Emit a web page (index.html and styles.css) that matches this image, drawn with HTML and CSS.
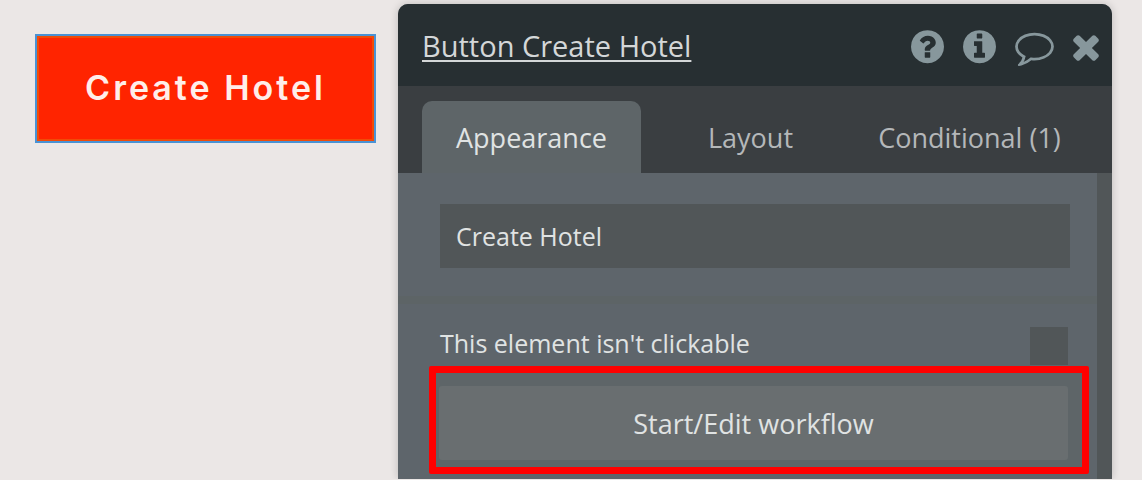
FILE: index.html
```html
<!DOCTYPE html>
<html lang="en">
<head>
    <meta charset="UTF-8">
    <meta name="viewport" content="width=device-width, initial-scale=1.0">
    <title>Button Create Hotel</title>
    <link rel="stylesheet" href="styles.css">
</head>
<body>
    <main class="editor">
        <button type="button" class="canvas-button">Create Hotel</button>

        <section class="panel">
            <header class="panel-header">
                <a href="#" class="panel-title">Button Create Hotel</a>
                <div class="panel-actions">
                    <button type="button" aria-label="Help">
                        <svg width="33" height="36" viewBox="128 128 1536 1664"><path d="M1024 1376v-192q0-14-9-23t-23-9h-192q-14 0-23 9t-9 23v192q0 14 9 23t23 9h192q14 0 23-9t9-23zm256-672q0-88-55.5-163t-138.5-116-170-41q-243 0-371 213-15 24 8 42l132 100q7 6 19 6 16 0 25-12 53-68 86-92 34-24 86-24 48 0 85.5 26t37.5 59q0 38-20 61t-68 45q-63 28-115.5 86.5t-52.5 125.5v36q0 14 9 23t23 9h192q14 0 23-9t9-23q0-19 21.5-49.5t54.5-49.5q32-18 49-28.5t46-35 44.5-48 28-60.5 12.5-81zm384 192q0 209-103 385.5t-279.5 279.5-385.5 103-385.5-103-279.5-279.5-103-385.5 103-385.5 279.5-279.5 385.5-103 385.5 103 279.5 279.5 103 385.5z"/></svg>
                    </button>
                    <button type="button" aria-label="Info">
                        <svg width="33" height="36" viewBox="128 128 1536 1664"><path d="M1152 1376v-160q0-14-9-23t-23-9h-96v-512q0-14-9-23t-23-9h-320q-14 0-23 9t-9 23v160q0 14 9 23t23 9h96v320h-96q-14 0-23 9t-9 23v160q0 14 9 23t23 9h448q14 0 23-9t9-23zm-128-896v-160q0-14-9-23t-23-9h-192q-14 0-23 9t-9 23v160q0 14 9 23t23 9h192q14 0 23-9t9-23zm640 416q0 209-103 385.5t-279.5 279.5-385.5 103-385.5-103-279.5-279.5-103-385.5 103-385.5 279.5-279.5 385.5-103 385.5 103 279.5 279.5 103 385.5z"/></svg>
                    </button>
                    <button type="button" aria-label="Comment">
                        <svg width="39" height="36" viewBox="0 128 1792 1664"><path d="M896 384q-204 0-381.5 69.5t-282 187.5-104.5 255q0 112 71.5 213.500t201.5 175.500l87 50-27 96q-24 91-70 172 152-63 275-171l43-38 57 6q69 8 130 8 204 0 381.5-69.5t282-187.5 104.5-255-104.5-255-282-187.5-381.5-69.5zm896 512q0 174-120 321.5t-326 233-450 85.5q-70 0-145-8-198 175-460 242-49 14-114 22h-5q-15 0-27-10.500t-16-27.500v-1q-3-4-.5-12t2-10 4.500-9.500l6-9 7-8.500 8-9q7-8 31-34.500t34.500-38 31-39.500 32.500-51 27-59 26-76q-157-89-247.500-220t-90.500-281q0-174 120-321.500t326-233 450-85.500 450 85.500 326 233 120 321.500z"/></svg>
                    </button>
                    <button type="button" aria-label="Close">
                        <svg width="26" height="36" viewBox="302 128 1188 1664"><path d="M1490 1322q0 40-28 68l-136 136q-28 28-68 28t-68-28l-294-294-294 294q-28 28-68 28t-68-28l-136-136q-28-28-28-68t28-68l294-294-294-294q-28-28-28-68t28-68l136-136q28-28 68-28t68 28l294 294 294-294q28-28 68-28t68 28l136 136q28 28 28 68t-28 68l-294 294 294 294q28 28 28 68z"/></svg>
                    </button>
                </div>
            </header>

            <nav class="tabs">
                <button type="button" class="tab active">Appearance</button>
                <button type="button" class="tab">Layout</button>
                <button type="button" class="tab">Conditional (1)</button>
            </nav>

            <form class="panel-body">
                <div class="caption-group">
                    <input type="text" class="caption" name="caption" value="Create Hotel" aria-label="Caption">
                </div>
                <div class="clickable-group">
                    <label for="not_clickable">This element isn't clickable</label>
                    <input type="checkbox" id="not_clickable" name="not_clickable">
                </div>
                <div class="highlight">
                    <button type="button" class="workflow">Start/Edit workflow</button>
                </div>
            </form>
        </section>
    </main>
</body>
</html>
```
FILE: styles.css
```css
* {
    box-sizing: border-box;
}
body {
    margin: 0;
    background-color: #ebe7e6;
    font-family: "Open Sans", "Noto Sans", sans-serif;
    font-size: 25px;
    color: #e0e3e3;
}
button, input {
    font: inherit;
    color: inherit;
    border: none;
    padding: 0;
}
button {
    cursor: pointer;
}
.editor {
    display: flex;
    align-items: flex-start;
    gap: 22px;
    padding: 4px 30px 0 35px;
}
.canvas-button {
    width: 341px;
    height: 109px;
    margin-top: 30px;
    padding-bottom: 2px;
    border: 2px solid #4a92d4;
    box-shadow: inset 0 0 0 2px #f04c08;
    background-color: #ff2400;
    color: #ffeeea;
    font-family: Inter, sans-serif;
    font-size: 34px;
    font-weight: 600;
    letter-spacing: 3px;
}
.panel {
    flex: 1;
    border-radius: 10px 10px 0 0;
    overflow: hidden;
    background-color: #5e656b;
    box-shadow: 0 0 8px rgba(0, 0, 0, 0.2);
}
.panel-header {
    display: flex;
    align-items: center;
    justify-content: space-between;
    height: 82px;
    padding: 0 13px 0 24px;
    background-color: #272f32;
}
.panel-title {
    color: #d4d7d8;
    font-size: 29px;
    text-decoration-thickness: 2px;
    text-underline-offset: 3px;
}
.panel-actions {
    display: flex;
    gap: 19px;
    padding-top: 6px;
}
.panel-actions button {
    background: none;
}
.panel-actions svg {
    display: block;
    fill: #87979c;
}
.tabs {
    display: flex;
    padding: 15px 33px 0 24px;
    background-color: #3a3e41;
}
.tab {
    flex: 1 1 0;
    height: 72px;
    border-radius: 10px 10px 0 0;
    background: none;
    color: #b4b7b9;
    font-size: 27px;
    white-space: nowrap;
}
.tab.active {
    background-color: #5e6568;
    color: #e0e3e3;
}
.panel-body {
    padding-bottom: 5px;
    border-right: 15px solid #515658; /* scrollbar track */
}
.caption-group {
    padding: 31px 27px 28px 42px;
    border-bottom: 8px solid #5d6466;
}
.caption {
    display: block;
    width: 100%;
    height: 64px;
    padding: 0 16px;
    background-color: #515658;
}
.clickable-group {
    display: flex;
    justify-content: space-between;
    align-items: flex-start;
    height: 62px;
    padding: 23px 29px 0 42px;
}
.clickable-group label {
    line-height: 32px;
}
.clickable-group input {
    appearance: none;
    width: 38px;
    height: 38px;
    margin: 0;
    background-color: #515658;
}
.highlight {
    margin: 0 8px 0 31px;
    padding: 13px 14px 7px 3px;
    border: 7px solid #ff0000;
    border-radius: 2px;
    background-color: #5e6568;
}
.workflow {
    display: block;
    width: 100%;
    height: 74px;
    border-radius: 3px;
    background-color: #696e70;
    font-size: 27px;
}
```
